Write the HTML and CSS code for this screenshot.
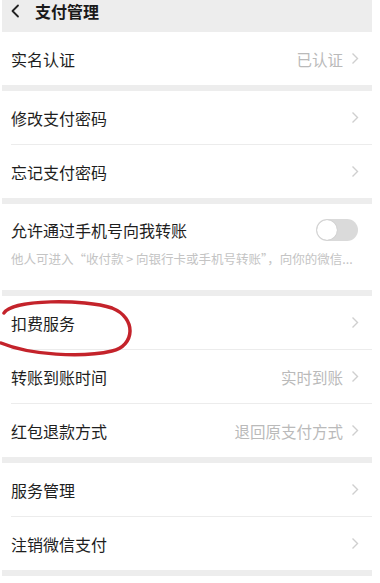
FILE: index.html
```html
<!DOCTYPE html>
<html lang="zh-CN">
<head>
<meta charset="utf-8">
<title>支付管理</title>
<link rel="stylesheet" href="styles.css">
</head>
<body>
<div class="page">
  <div class="screen">
    <header class="topbar">
      <svg class="back" width="10" height="14" viewBox="0 0 10 14"><path d="M8 1.5 L2.5 7 L8 12.5" fill="none" stroke="#222" stroke-width="1.8" stroke-linecap="round" stroke-linejoin="round"/></svg>
      <h1 class="title">支付管理</h1>
    </header>

    <section class="group">
      <div class="row">
        <span class="label">实名认证</span>
        <span class="value">已认证</span>
        <svg class="chev" width="8" height="13" viewBox="0 0 8 13"><path d="M1.5 1.5 L6.5 6.5 L1.5 11.5" fill="none" stroke="#cfcfcf" stroke-width="1.4"/></svg>
      </div>
    </section>

    <section class="group">
      <div class="row">
        <span class="label">修改支付密码</span>
        <svg class="chev" width="8" height="13" viewBox="0 0 8 13"><path d="M1.5 1.5 L6.5 6.5 L1.5 11.5" fill="none" stroke="#cfcfcf" stroke-width="1.4"/></svg>
      </div>
      <div class="divider"></div>
      <div class="row">
        <span class="label">忘记支付密码</span>
        <svg class="chev" width="8" height="13" viewBox="0 0 8 13"><path d="M1.5 1.5 L6.5 6.5 L1.5 11.5" fill="none" stroke="#cfcfcf" stroke-width="1.4"/></svg>
      </div>
    </section>

    <section class="group">
      <div class="row-tall">
        <div class="tall-head">
          <span class="label">允许通过手机号向我转账</span>
          <span class="toggle"><span class="knob"></span></span>
        </div>
        <p class="sub">他人可进入“收付款 &gt; 向银行卡或手机号转账”，向你的微信...</p>
      </div>
    </section>

    <section class="group">
      <div class="row">
        <span class="label">扣费服务</span>
        <svg class="chev" width="8" height="13" viewBox="0 0 8 13"><path d="M1.5 1.5 L6.5 6.5 L1.5 11.5" fill="none" stroke="#cfcfcf" stroke-width="1.4"/></svg>
      </div>
      <div class="divider"></div>
      <div class="row">
        <span class="label">转账到账时间</span>
        <span class="value">实时到账</span>
        <svg class="chev" width="8" height="13" viewBox="0 0 8 13"><path d="M1.5 1.5 L6.5 6.5 L1.5 11.5" fill="none" stroke="#cfcfcf" stroke-width="1.4"/></svg>
      </div>
      <div class="divider"></div>
      <div class="row">
        <span class="label">红包退款方式</span>
        <span class="value">退回原支付方式</span>
        <svg class="chev" width="8" height="13" viewBox="0 0 8 13"><path d="M1.5 1.5 L6.5 6.5 L1.5 11.5" fill="none" stroke="#cfcfcf" stroke-width="1.4"/></svg>
      </div>
    </section>

    <section class="group">
      <div class="row">
        <span class="label">服务管理</span>
        <svg class="chev" width="8" height="13" viewBox="0 0 8 13"><path d="M1.5 1.5 L6.5 6.5 L1.5 11.5" fill="none" stroke="#cfcfcf" stroke-width="1.4"/></svg>
      </div>
      <div class="divider"></div>
      <div class="row">
        <span class="label">注销微信支付</span>
        <svg class="chev" width="8" height="13" viewBox="0 0 8 13"><path d="M1.5 1.5 L6.5 6.5 L1.5 11.5" fill="none" stroke="#cfcfcf" stroke-width="1.4"/></svg>
      </div>
    </section>
    <div class="tail"></div>
  </div>
  <div class="rail"></div>
</div>

<svg class="circle" width="380" height="583" viewBox="0 0 380 583">
  <path d="M4 313 C 12 299, 85 299, 112 308 C 137 318, 135 346, 112 351 C 82 358, 30 355, 1 343" fill="none" stroke="#c4232b" stroke-width="3.5" stroke-linecap="round"/>
</svg>
</body>
</html>
```

FILE: styles.css
```css
html, body {
  margin: 0;
  padding: 0;
  background: #ffffff;
}

body {
  position: relative;
  width: 380px;
  height: 583px;
  overflow: hidden;
  font-family: "Noto Sans CJK SC", "Noto Sans", sans-serif;
  color: #1e1e1e;
}

.page {
  display: flex;
  padding-left: 2px;
}

.screen {
  width: 370px;
  display: flex;
  flex-direction: column;
  background: #ededed;
}

.rail {
  width: 8px;
  background: #ffffff;
}

.topbar {
  height: 32px;
  display: flex;
  align-items: flex-start;
  gap: 15px;
  padding-left: 8px;
  background: #ededed;
}

.back {
  margin-top: 4px;
}

.title {
  margin: 0;
  font-size: 16px;
  line-height: 22px;
  font-weight: 700;
  color: #1a1a1a;
}

.group {
  background: #ffffff;
  display: flex;
  flex-direction: column;
  margin-bottom: 6px;
}

.row {
  height: 53px;
  display: flex;
  align-items: center;
  padding: 0 13px 0 9px;
}

.label {
  flex: 1;
  font-size: 16px;
  line-height: 22px;
  color: #1e1e1e;
}

.value {
  font-size: 15.5px;
  line-height: 22px;
  color: #bababa;
  margin-right: 8px;
}

.chev {
  flex: none;
}

.divider {
  height: 1px;
  margin-left: 9px;
  background: #ececec;
}

.row-tall {
  height: 86px;
  padding: 15px 13px 0 9px;
  box-sizing: border-box;
}

.tall-head {
  display: flex;
  align-items: center;
  height: 22px;
}

.toggle {
  width: 42px;
  height: 22px;
  border-radius: 11px;
  background: #dadada;
  position: relative;
  margin-right: 1px;
  box-sizing: border-box;
}

.knob {
  position: absolute;
  left: 1px;
  top: 1px;
  width: 20px;
  height: 20px;
  border-radius: 50%;
  background: #ffffff;
  box-shadow: 0 0 1px rgba(0,0,0,0.25);
}

.sub {
  margin: 9px 0 0;
  font-size: 12.5px;
  line-height: 17px;
  color: #c4c4c4;
  white-space: nowrap;
  overflow: hidden;
}

.tail {
  flex: 1;
  height: 12px;
}

.circle {
  position: absolute;
  top: 0;
  left: 0;
  pointer-events: none;
}
```
